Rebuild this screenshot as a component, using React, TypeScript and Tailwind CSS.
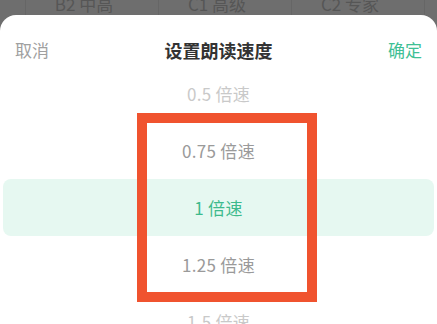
const rows = [
  { label: '0.5 倍速', cls: 'text-[#c9c9c9]' },
  { label: '0.75 倍速', cls: 'text-[#9a9a9a]' },
  { label: '1 倍速', cls: 'text-[#3dba8c]', active: true },
  { label: '1.25 倍速', cls: 'text-[#9a9a9a]' },
  { label: '1.5 倍速', cls: 'text-[#c9c9c9]' },
];

export default function App() {
  return (
    <div
      className="relative w-[437px] h-[324px] overflow-hidden bg-[#6e6e6e] flex flex-col"
      style={{ fontFamily: '"Noto Sans CJK SC", "Noto Sans", sans-serif' }}
    >
      {/* dimmed level tabs behind the sheet */}
      <div className="h-[15px] shrink-0 flex pl-[25px] pr-[12px] text-[17px] leading-none text-[#565656] overflow-hidden">
        {['B2 中高', 'C1 高级', 'C2 专家'].map((t) => (
          <div key={t} className="flex-1 flex justify-center pr-[16px] border-l border-[#666] last:border-r">
            <span className="-mt-[5px]">{t}</span>
          </div>
        ))}
      </div>

      <div className="shrink-0 bg-white rounded-t-[16px]">
        <div className="h-[50px] pt-[24px] px-[15px] flex justify-between items-start leading-[22px]">
          <span className="text-[17px] text-[#a0a0a0]">取消</span>
          <span className="text-[18px] font-bold text-[#333]">设置朗读速度</span>
          <span className="text-[17px] text-[#3ec095]">确定</span>
        </div>
        {rows.map((r) => (
          <div
            key={r.label}
            className={`h-[57px] mx-[3px] flex items-center justify-center text-[17px] tracking-[0.3px] ${r.cls} ${
              r.active ? 'bg-[#e6f8f1] rounded-lg' : ''
            }`}
          >
            {r.label}
          </div>
        ))}
      </div>

      {/* annotation box */}
      <div className="absolute left-[137px] top-[113px] w-[180px] h-[189px] border-[10px] border-[#f0532f]" />
    </div>
  );
}
